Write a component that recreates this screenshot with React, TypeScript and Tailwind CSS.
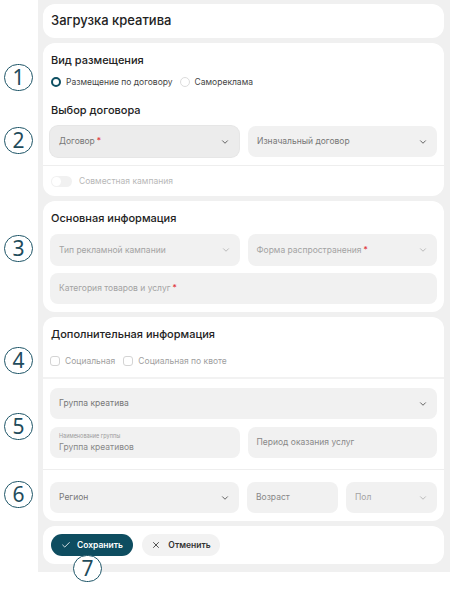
import React from "react";
import { ChevronDown, Check, X } from "lucide-react";

const font = { fontFamily: "Inter, 'Noto Sans', sans-serif" };

const Req = () => <span className="ml-[2px] text-[#e0393e]">*</span>;

const Select = ({
  label,
  required,
  className = "",
  dark,
  faded,
}: {
  label: string;
  required?: boolean;
  className?: string;
  dark?: boolean;
  faded?: boolean;
}) => (
  <div
    className={`flex h-full items-center justify-between rounded-[8px] pl-[9px] pr-[9px] ${
      dark ? "bg-[#ececec] shadow-[0_0_0_1px_#e6e6e6]" : "bg-[#f1f1f1]"
    } ${className}`}
  >
    <span className={`text-[8.5px] ${faded ? "text-[#a3a3a3]" : "text-[#777]"}`}>
      {label}
      {required && <Req />}
    </span>
    <ChevronDown
      size={10}
      strokeWidth={2.2}
      className={faded ? "text-[#b5b5b5]" : "text-[#555]"}
    />
  </div>
);

const Field = ({
  label,
  required,
  className = "",
  faded,
}: {
  label: string;
  required?: boolean;
  className?: string;
  faded?: boolean;
}) => (
  <div className={`flex h-full items-center rounded-[8px] bg-[#f1f1f1] pl-[9px] ${className}`}>
    <span className={`text-[8.5px] ${faded ? "text-[#a3a3a3]" : "text-[#888]"}`}>
      {label}
      {required && <Req />}
    </span>
  </div>
);

const Marker = ({ n, className }: { n: number; className: string }) => (
  <div
    className={`absolute flex h-[27px] w-[29px] items-center justify-center rounded-full border-[1.5px] border-[#1f5668] bg-white text-[21px] font-normal leading-none text-[#1f4c5c] ${className}`}
    style={{ fontFamily: "'Noto Sans', 'Open Sans', sans-serif" }}
  >
    {n}
  </div>
);

const App = () => {
  return (
    <div className="relative h-[592px] w-[450px] bg-white" style={font}>
      <div className="ml-[38px] flex flex-col gap-[5px] bg-[#f0f0f0] px-[5px] pb-[8px] pt-[4px] pr-[6px]">
        {/* Заголовок */}
        <div className="flex h-[34px] items-center rounded-[12px] bg-white px-[8px]">
          <h1 className="text-[13px] font-medium text-[#222]">Загрузка креатива</h1>
        </div>

        {/* Вид размещения и договор */}
        <div className="rounded-[12px] bg-white">
          <div className="px-[7px] pb-[8px] pt-[9px]">
            <h2 className="pl-[1px] text-[11px] font-medium leading-[16px] text-[#222]">
              Вид размещения
            </h2>
            <div className="mt-[8px] flex h-[12px] items-center gap-[5px] pl-[1px] text-[8.5px] text-[#444]">
              <span className="h-[10px] w-[10px] rounded-full border-[2.5px] border-[#0e4f62]" />
              <span>Размещение по договору</span>
              <span className="ml-[2px] h-[10px] w-[10px] rounded-full border border-[#dcdcdc]" />
              <span>Самореклама</span>
            </div>
            <h2 className="mt-[14px] pl-[1px] text-[11px] font-medium leading-[16px] text-[#222]">
              Выбор договора
            </h2>
            <div className="mt-[8px] grid h-[31px] grid-cols-2 gap-[9px]">
              <Select label="Договор" required dark />
              <Select label="Изначальный договор" />
            </div>
          </div>
          <div className="h-px bg-[#eeeeee]" />
          <div className="flex h-[30px] items-center gap-[7px] px-[8px]">
            <span className="flex h-[11px] w-[21px] items-center rounded-full bg-[#f1f1f1] p-[1px]">
              <span className="h-[9px] w-[9px] rounded-full bg-white" />
            </span>
            <span className="text-[8.5px] text-[#b8b8b8]">Совместная кампания</span>
          </div>
        </div>

        {/* Основная информация */}
        <div className="rounded-[12px] bg-white px-[7px] pb-[8px] pt-[9px]">
          <h2 className="pl-[1px] text-[11px] font-medium leading-[16px] text-[#222]">
            Основная информация
          </h2>
          <div className="mt-[8px] grid h-[32px] grid-cols-2 gap-[8px]">
            <Select label="Тип рекламной кампании" faded />
            <Select label="Форма распространения" required faded />
          </div>
          <div className="mt-[7px] h-[31px]">
            <Field label="Категория товаров и услуг" required faded />
          </div>
        </div>

        {/* Дополнительная информация */}
        <div className="rounded-[12px] bg-white">
          <div className="px-[7px] pb-[10px] pt-[9px]">
            <h2 className="pl-[1px] text-[11px] font-medium leading-[16px] text-[#222]">
              Дополнительная информация
            </h2>
            <div className="mt-[13px] flex h-[12px] items-center gap-[5px] text-[8.5px] text-[#a0a0a0]">
              <span className="h-[10px] w-[10px] rounded-[3px] border border-[#d4d4d4]" />
              <span>Социальная</span>
              <span className="ml-[3px] h-[10px] w-[10px] rounded-[3px] border border-[#d4d4d4]" />
              <span>Социальная по квоте</span>
            </div>
          </div>
          <div className="h-[2px] bg-[#f2f2f2]" />
          <div className="px-[7px] pb-[11px] pt-[9px]">
            <div className="h-[31px]">
              <Select label="Группа креатива" />
            </div>
            <div className="mt-[8px] grid h-[31px] grid-cols-2 gap-[8px]">
              <div className="flex flex-col justify-center gap-[1px] rounded-[8px] bg-[#f1f1f1] pl-[9px]">
                <span className="text-[5.5px] leading-[8px] text-[#9a9a9a]">Наименование группы</span>
                <span className="text-[8.5px] leading-[12px] text-[#888]">Группа креативов</span>
              </div>
              <Field label="Период оказания услуг" />
            </div>
          </div>
          <div className="h-px bg-[#eeeeee]" />
          <div className="flex h-[51px] gap-[8px] px-[7px] pb-[8px] pt-[12px]">
            <Select label="Регион" className="w-[189px]" />
            <Field label="Возраст" className="w-[91px]" />
            <Select label="Пол" className="flex-1" faded />
          </div>
        </div>

        {/* Кнопки */}
        <div className="flex h-[38px] items-center gap-[9px] rounded-[12px] bg-white px-[8px]">
          <button className="flex h-[22px] w-[82px] items-center justify-center gap-[6px] rounded-full bg-[#0e4d60] text-[8.5px] font-semibold text-white">
            <Check size={10} strokeWidth={2} />
            Сохранить
          </button>
          <button className="flex h-[22px] w-[78px] items-center justify-center gap-[7px] rounded-full bg-[#f2f2f2] text-[8.5px] font-semibold text-[#333]">
            <X size={10} strokeWidth={2} />
            Отменить
          </button>
        </div>
      </div>

      {/* Номера */}
      <Marker n={1} className="left-[4px] top-[64px]" />
      <Marker n={2} className="left-[4px] top-[127px]" />
      <Marker n={3} className="left-[4px] top-[235px]" />
      <Marker n={4} className="left-[4px] top-[347px]" />
      <Marker n={5} className="left-[4px] top-[413px]" />
      <Marker n={6} className="left-[4px] top-[481px]" />
      <Marker n={7} className="left-[73px] top-[555px]" />
    </div>
  );
};

export default App;
